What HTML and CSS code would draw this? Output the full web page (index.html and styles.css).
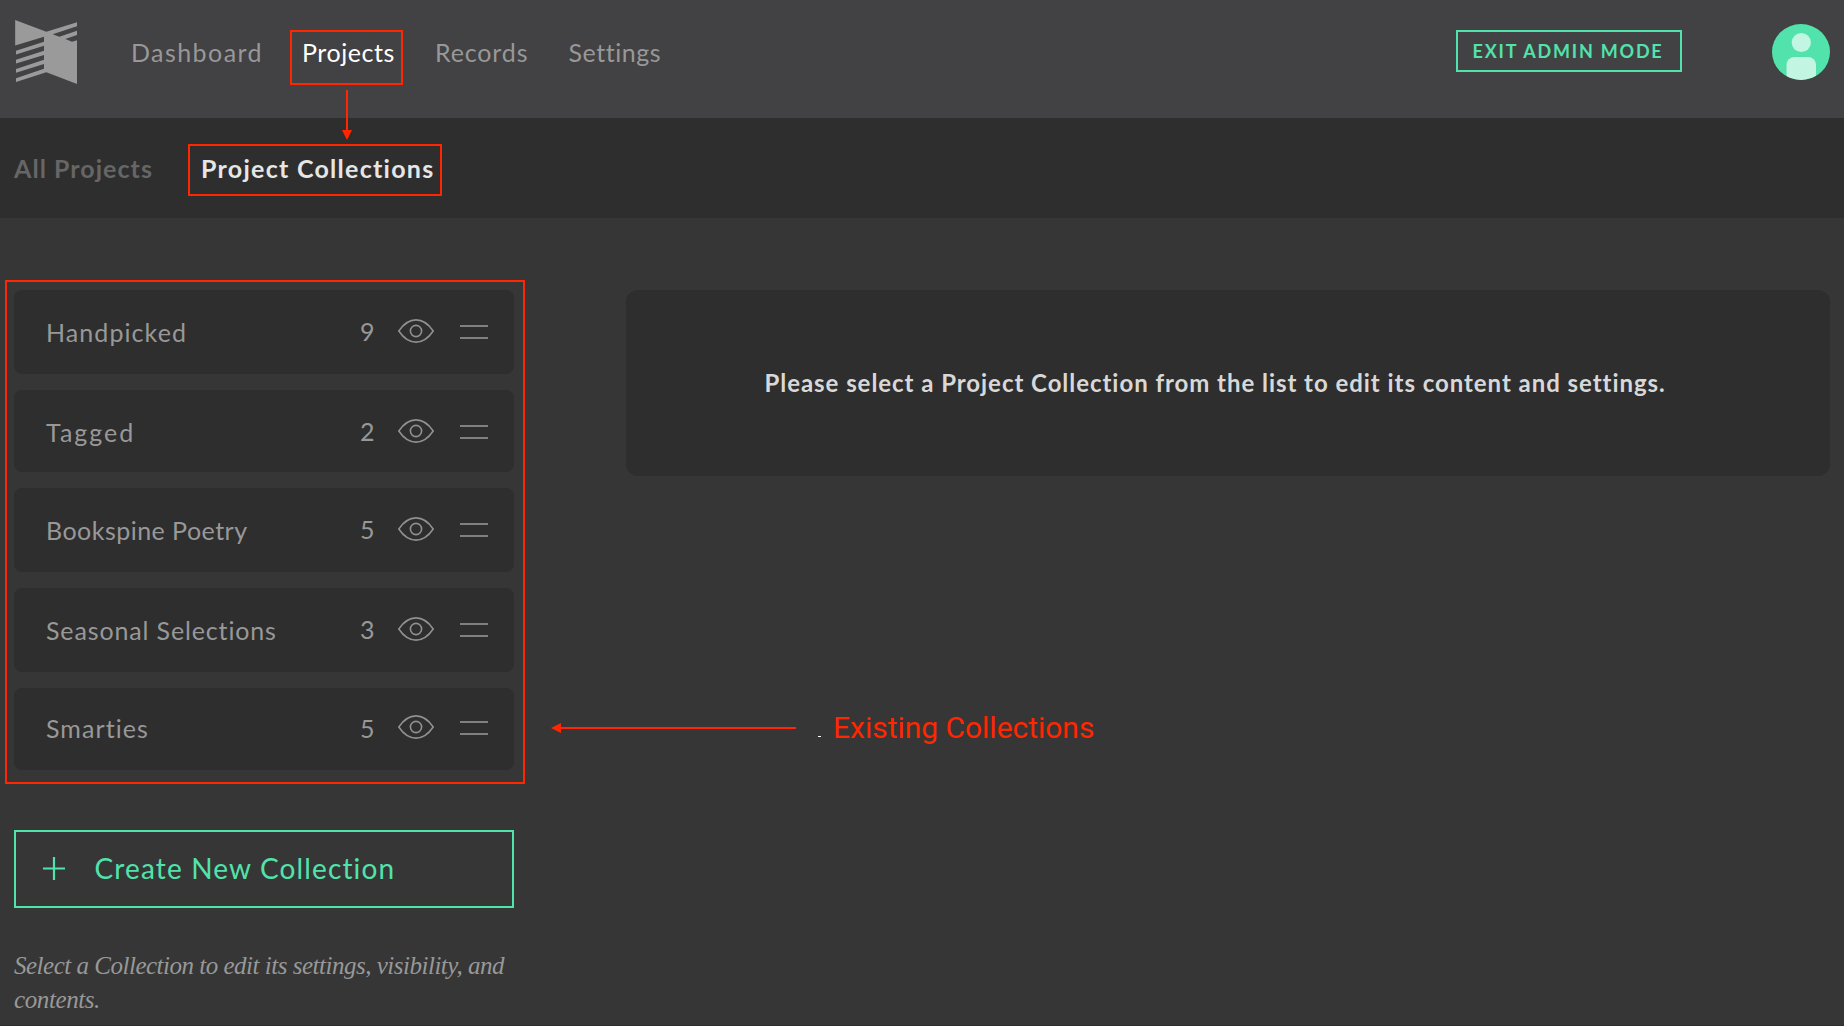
FILE: index.html
```html
<!DOCTYPE html>
<html lang="en">
<head>
<meta charset="utf-8">
<title>Project Collections</title>
<link rel="stylesheet" href="styles.css">
</head>
<body>
<svg class="defs" aria-hidden="true">
  <symbol id="eye" viewBox="0 0 36 24">
    <path d="M.8 12C5.500 5 11 .9 18 .9S30.500 5 35.200 12C30.500 19 25 23.100 18 23.100S5.500 19 .8 12Z"/>
    <circle cx="18" cy="12" r="5.600"/>
  </symbol>
</svg>

<header class="header">
  <svg class="logo" viewBox="45 60 186 192">
    <path d="M45.500 60 139 95.500 231 66.500V79L158 102.500 178 110 231 92.500V105L196 117 216 125 231 121V252L139 216.500 48 246V235L132 206V192L48 218.500V207L132 179V165L48 190.500V179L132 152V137L48 163.500V152L132 125V110L45.500 136.500Z"/>
  </svg>
  <nav class="nav">
    <a class="nav-link nav-link--dashboard">Dashboard</a>
    <a class="nav-link nav-link--active">Projects</a>
    <a class="nav-link nav-link--records">Records</a>
    <a class="nav-link">Settings</a>
  </nav>
  <button class="exit">EXIT ADMIN MODE</button>
  <svg class="avatar" viewBox="0 0 58 56">
    <clipPath id="avatar-clip"><ellipse cx="29" cy="28" rx="29" ry="28"/></clipPath>
    <g clip-path="url(#avatar-clip)">
      <rect width="58" height="56" fill="#52e3ac"/>
      <circle cx="29.300" cy="18.500" r="9.600" fill="#c2f6e2"/>
      <rect x="14.500" y="33" width="29.500" height="34" rx="8" fill="#c2f6e2"/>
    </g>
  </svg>
</header>

<nav class="subnav">
  <a class="subnav-link">All Projects</a>
  <a class="subnav-link subnav-link--active">Project Collections</a>
</nav>

<main class="main">
  <aside class="sidebar">
    <ul class="list">
      <li class="item"><span class="name name--handpicked">Handpicked</span><span class="count">9</span><svg class="eye"><use href="#eye"/></svg><span class="handle"></span></li>
      <li class="item item--short"><span class="name name--tagged">Tagged</span><span class="count">2</span><svg class="eye"><use href="#eye"/></svg><span class="handle"></span></li>
      <li class="item"><span class="name name--poetry">Bookspine Poetry</span><span class="count">5</span><svg class="eye"><use href="#eye"/></svg><span class="handle"></span></li>
      <li class="item"><span class="name name--seasonal">Seasonal Selections</span><span class="count">3</span><svg class="eye"><use href="#eye"/></svg><span class="handle"></span></li>
      <li class="item item--short item--last"><span class="name">Smarties</span><span class="count">5</span><svg class="eye"><use href="#eye"/></svg><span class="handle"></span></li>
    </ul>
    <button class="create">
      <svg class="plus" viewBox="0 0 22 23"><path d="M11 0V23M0 11.500H22"/></svg>
      <span>Create New Collection</span>
    </button>
    <p class="hint">Select a Collection to edit its settings, visibility, and <span class="hint-end">contents.</span></p>
  </aside>
  <section class="panel">Please select a Project Collection from the list to edit its content and settings.</section>
</main>

<div class="mark mark--projects"></div>
<div class="mark mark--subnav"></div>
<div class="mark mark--list"></div>
<svg class="arrow arrow--down" viewBox="0 0 10 50"><path d="M4 0H6V40H10L5 50 0 40H4Z"/></svg>
<svg class="arrow arrow--left" viewBox="0 0 245 10"><path d="M245 4V6H10V10L0 5 10 0V4Z"/></svg>
<span class="dash"></span>
<span class="note">Existing Collections</span>
</body>
</html>
```
FILE: styles.css
```css
* { box-sizing: border-box; }

body {
  position: relative;
  height: 1026px;
  margin: 0;
  overflow: hidden;
  background: #363636;
  border-bottom: 1px solid #322c30;
  color: #989898;
  font: 25px/30px Lato, sans-serif;
}

button {
  padding: 0;
  background: none;
  border: 2px solid #52e3ac;
  color: #52e3ac;
  font: inherit;
}

.defs { position: absolute; width: 0; height: 0; }

.header {
  display: flex;
  align-items: flex-start;
  height: 118px;
  padding: 20px 14px 0 15px;
  background: #424143;
}

.logo { width: 62px; height: 64px; fill: #9a9a9a; }

.nav {
  display: grid;
  grid-template-columns: 171px 133px 133.500px auto;
  margin: 17px 0 0 54px;
}

.nav-link { letter-spacing: .54px; }
.nav-link--dashboard { letter-spacing: 1.430px; }
.nav-link--records { letter-spacing: .85px; }
.nav-link--active { color: #fff; }

.exit {
  width: 226px;
  height: 42px;
  margin: 10px 90px 0 auto;
  padding: 0 0 0 14.500px;
  font-size: 18px;
  font-weight: 700;
  line-height: 36px;
  letter-spacing: 1.790px;
  text-align: left;
}

.avatar { width: 58px; height: 56px; margin-top: 4px; }

.subnav {
  display: flex;
  gap: 47px;
  height: 100px;
  padding: 35px 14px 0;
  background: #2e2e2e;
  font-weight: 700;
}

.subnav-link { width: 140px; color: #666; letter-spacing: 1.040px; white-space: nowrap; }
.subnav-link--active { color: #e6e6e6; letter-spacing: 1.270px; }

.main {
  display: flex;
  justify-content: space-between;
  align-items: flex-start;
  padding: 72px 14px 0;
}

.sidebar { width: 500px; }

.list {
  display: flex;
  flex-direction: column;
  gap: 16px;
  margin: 0;
  padding: 0;
  list-style: none;
}

.item {
  display: flex;
  align-items: flex-start;
  height: 84px;
  padding: 25px 26px 0 32px;
  background: #2e2e2e;
  border-radius: 8px;
}

.item--short { height: 82px; }

.name { flex: 1; padding-top: 2px; letter-spacing: 1.070px; }
.name--handpicked { letter-spacing: 1.080px; }
.name--tagged { letter-spacing: 2px; }
.name--poetry { letter-spacing: .47px; }
.name--seasonal { letter-spacing: .86px; }

.count { margin-right: 23.500px; padding-top: 1px; font-size: 25px; }

.eye {
  width: 36px;
  height: 24px;
  margin: 4px 26px 0 0;
  fill: none;
  stroke: #909090;
  stroke-width: 1.600;
}

.handle {
  width: 28px;
  height: 14px;
  margin-top: 10px;
  border: solid #808080;
  border-width: 2px 0;
}

.item--last .name { padding-top: 0; }
.item--last .count { padding-top: 0; }
.item--last .eye { margin-top: 2px; }
.item--last .handle { margin-top: 8px; }

.create {
  display: flex;
  align-items: center;
  gap: 29.500px;
  width: 500px;
  height: 78px;
  margin-top: 60px;
  padding: 0 0 1px 27px;
  font-size: 28px;
  letter-spacing: 1.140px;
}

.create span { margin-top: -2px; }

.plus { width: 22px; height: 23px; stroke: currentColor; stroke-width: 2.200; }

.hint {
  margin: 41px 0 0;
  font: italic 25px/34px "Liberation Serif", serif;
  letter-spacing: -.49px;
}

.hint-end { letter-spacing: -.4px; }

.panel {
  width: 1204px;
  height: 186px;
  padding: 78px 0 0 138.500px;
  background: #2e2e2e;
  border-radius: 12px;
  color: #d8d8d8;
  font-size: 24px;
  font-weight: 700;
  letter-spacing: .950px;
  white-space: nowrap;
}

/* Annotations drawn over the interface */
.mark { position: absolute; border: 2px solid #ff2600; }
.mark--projects { left: 290px; top: 30px; width: 113px; height: 55px; }
.mark--subnav { left: 188px; top: 144px; width: 254px; height: 52px; }
.mark--list { left: 5px; top: 280px; width: 520px; height: 504px; }

.arrow { position: absolute; fill: #ff2600; }
.arrow--down { left: 342px; top: 90px; width: 10px; height: 50px; }
.arrow--left { left: 551px; top: 723px; width: 245px; height: 10px; }

.dash { position: absolute; left: 818px; top: 736px; width: 3px; height: 1px; background: #fff; }

.note {
  position: absolute;
  left: 833px;
  top: 710px;
  color: #ff2600;
  font: 30px/36px Roboto, sans-serif;
  letter-spacing: -.02px;
}
```
